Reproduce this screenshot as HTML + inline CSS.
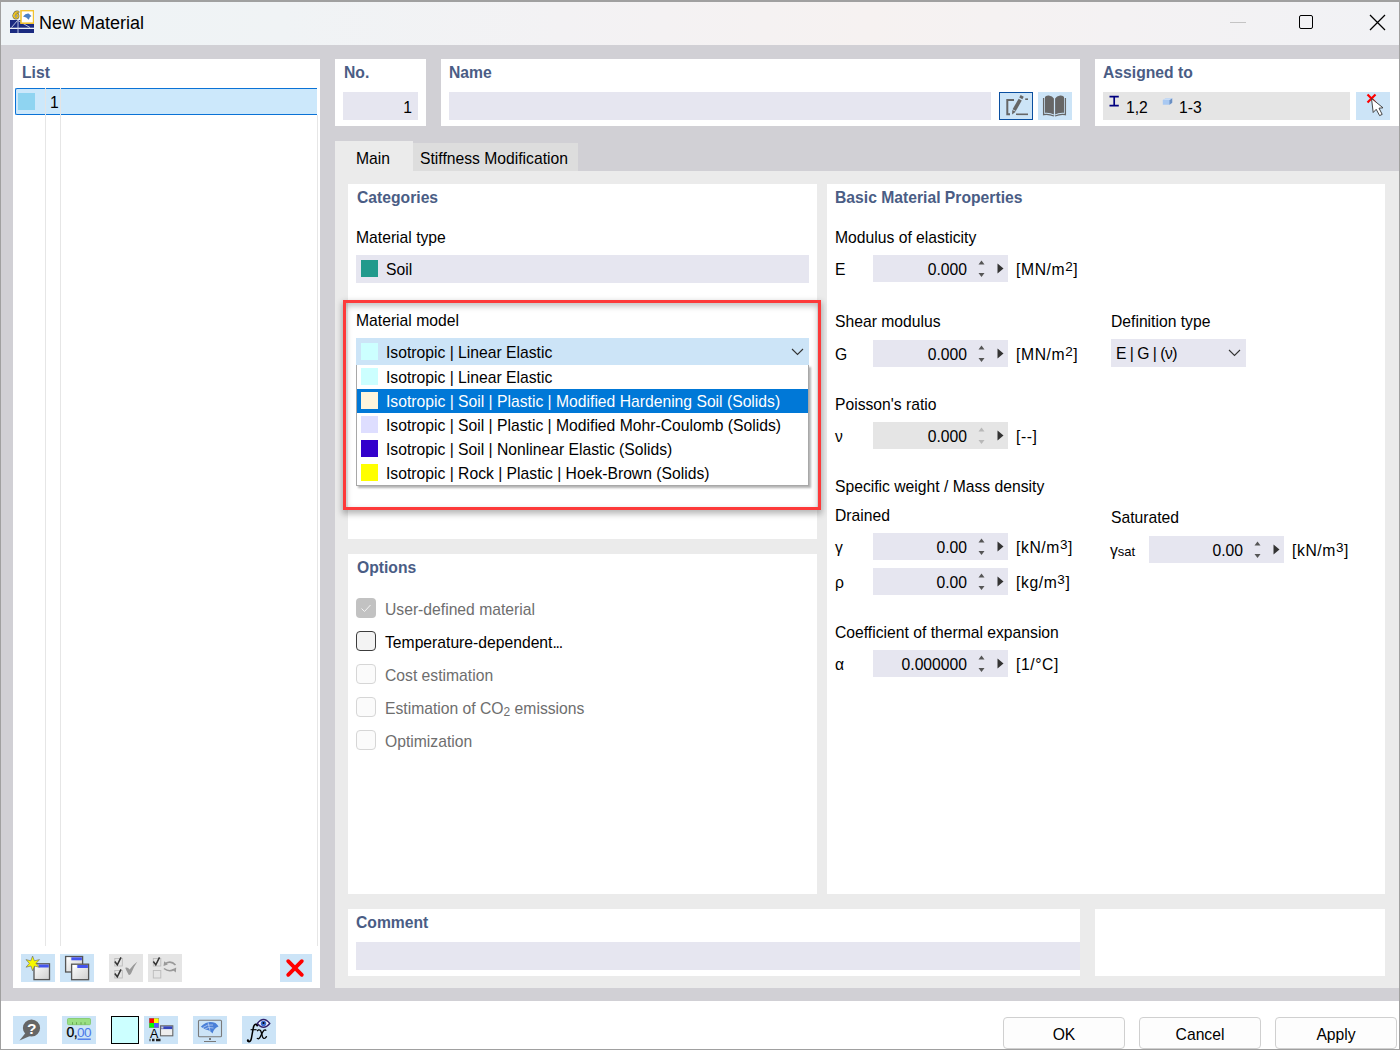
<!DOCTYPE html>
<html><head><meta charset="utf-8"><style>
html,body{margin:0;padding:0;width:1400px;height:1050px;overflow:hidden;background:#fff}
body{position:relative;font-family:"Liberation Sans",sans-serif}
body>div{position:absolute;box-sizing:content-box}
.t{white-space:nowrap;line-height:20px}
sup{font-size:13.5px;vertical-align:0;position:relative;top:-4px}
</style></head><body>
<div style="left:0px;top:0px;width:1400px;height:1050px;background:#a0a0a0;"></div>
<div style="left:1px;top:2px;width:1398px;height:43px;background:linear-gradient(90deg,#eef3f6 0%,#f0f3f5 20%,#f3f2f4 40%,#f6f2f1 62%,#f4f2f3 80%,#f1f2f5 100%);"></div>
<div style="left:1px;top:45px;width:1398px;height:956px;background:#d1d0d5;"></div>
<div style="left:1px;top:1001px;width:1398px;height:48px;background:#ffffff;"></div>
<svg style="position:absolute;left:10px;top:10px" width="24" height="24" viewBox="0 0 24 24">
<rect x="0" y="10" width="24" height="7.7" fill="#1a2a80"/>
<rect x="0" y="19" width="24" height="4" fill="#1a2a80"/>
<path d="M1.5 17.5 L7.5 10.5 M8 10 L8 23 M8 10.5 L20 17.5" stroke="#c8d0e8" stroke-width="0.9" fill="none"/>
<rect x="11" y="0.6" width="12.6" height="12.6" fill="#fff" stroke="#f2c230" stroke-width="1.6"/>
<path d="M13 6.5 Q15.5 3.2 18.5 3.5 L21.5 6 Q19.5 6.8 18.8 9.8 Q16.5 6.8 13 6.5 Z" fill="#4a80c8"/>
<g fill="none" stroke-linecap="round"><circle cx="6" cy="6" r="2.1" stroke="#6a6a5a" stroke-width="2.6"/><path d="M8.2 2 Q5 1.2 3.9 5.2 V6" stroke="#6a6a5a" stroke-width="2.6"/><circle cx="6" cy="6" r="2.1" stroke="#f2c824" stroke-width="1.4"/><path d="M8.2 2 Q5 1.2 3.9 5.2 V6" stroke="#f2c824" stroke-width="1.4"/></g>
</svg>
<div class="t" style="left:39px;top:13px;font-size:18px;color:#000;">New Material</div>
<div style="left:1230px;top:22px;width:16px;height:1px;background:#c4c4c4;"></div>
<div style="left:1299px;top:15px;width:12px;height:12px;border:1.5px solid #000;border-radius:2px"></div>
<svg style="position:absolute;left:1369px;top:14px" width="17" height="17" viewBox="0 0 17 17"><path d="M1 1 L16 16 M16 1 L1 16" stroke="#000" stroke-width="1.3"/></svg>
<div style="left:13px;top:59px;width:307px;height:929px;background:#ffffff;"></div>
<div class="t" style="left:22px;top:63px;font-size:15.7px;font-weight:bold;color:#4a5d85;">List</div>
<div style="left:45px;top:88px;width:1px;height:858px;background:#e6e6e6;"></div>
<div style="left:60px;top:88px;width:1px;height:858px;background:#e6e6e6;"></div>
<div style="left:317px;top:115px;width:1px;height:831px;background:#e6e6e6;"></div>
<div style="left:15px;top:88px;width:301px;height:25px;background:#cce8fb;border:1.2px solid #0a72d6;border-right:none;border-radius:2px 0 0 2px"></div>
<div style="left:45px;top:88px;width:1px;height:27px;background:#e4e4e4;"></div>
<div style="left:60px;top:88px;width:1px;height:27px;background:#e4e4e4;"></div>
<div style="left:18px;top:93px;width:17px;height:17px;background:#8fd4f1;"></div>
<div class="t" style="left:50px;top:93px;font-size:15.7px;color:#000;">1</div>
<div style="left:21px;top:954px;width:34px;height:28px;background:#cce4f7;"></div>
<div style="left:60px;top:954px;width:34px;height:28px;background:#cce4f7;"></div>
<div style="left:109px;top:954px;width:34px;height:28px;background:#e5e5e5;"></div>
<div style="left:148px;top:954px;width:34px;height:28px;background:#e5e5e5;"></div>
<div style="left:280px;top:954px;width:32px;height:28px;background:#cce4f7;"></div>
<div style="left:335px;top:59px;width:91px;height:67px;background:#ffffff;"></div>
<div class="t" style="left:344px;top:63px;font-size:15.7px;font-weight:bold;color:#4a5d85;">No.</div>
<div style="left:343px;top:92px;width:75px;height:28px;background:#e6e6f0;"></div>
<div class="t" style="right:988px;top:98px;font-size:15.7px;color:#000;">1</div>
<div style="left:441px;top:59px;width:639px;height:67px;background:#ffffff;"></div>
<div class="t" style="left:449px;top:63px;font-size:15.7px;font-weight:bold;color:#4a5d85;">Name</div>
<div style="left:449px;top:92px;width:542px;height:28px;background:#e6e6f0;"></div>
<div style="left:999px;top:92px;width:32px;height:26px;background:#cce4f7;border:1px solid #0a4fa0"></div>
<div style="left:1038px;top:92px;width:34px;height:28px;background:#cce4f7;"></div>
<div style="left:1095px;top:59px;width:304px;height:67px;background:#ffffff;"></div>
<div class="t" style="left:1103px;top:63px;font-size:15.7px;font-weight:bold;color:#4a5d85;">Assigned to</div>
<div style="left:1103px;top:92px;width:247px;height:28px;background:#e5e5e5;"></div>
<div style="left:1356px;top:92px;width:34px;height:28px;background:#cce4f7;"></div>
<div style="left:335px;top:141px;width:78px;height:31px;background:#ebebeb;"></div>
<div style="left:413px;top:143px;width:165px;height:29px;background:#dddddd;"></div>
<div class="t" style="left:356px;top:149px;font-size:15.7px;color:#000;">Main</div>
<div class="t" style="left:420px;top:149px;font-size:15.7px;color:#000;">Stiffness Modification</div>
<div style="left:335px;top:171px;width:1064px;height:817px;background:#ebebeb;"></div>
<div style="left:348px;top:184px;width:469px;height:355px;background:#ffffff;"></div>
<div class="t" style="left:357px;top:188px;font-size:15.7px;font-weight:bold;color:#4a5d85;">Categories</div>
<div class="t" style="left:356px;top:228px;font-size:15.7px;color:#000;">Material type</div>
<div style="left:356px;top:255px;width:453px;height:28px;background:#e6e6f0;"></div>
<div style="left:361px;top:260px;width:17px;height:17px;background:#219a8c;"></div>
<div class="t" style="left:386px;top:260px;font-size:15.7px;color:#000;">Soil</div>
<div style="left:348px;top:554px;width:469px;height:340px;background:#ffffff;"></div>
<div class="t" style="left:357px;top:558px;font-size:15.7px;font-weight:bold;color:#4a5d85;">Options</div>
<div style="left:827px;top:184px;width:558px;height:710px;background:#ffffff;"></div>
<div class="t" style="left:835px;top:188px;font-size:15.7px;font-weight:bold;color:#4a5d85;">Basic Material Properties</div>
<div style="left:348px;top:909px;width:732px;height:67px;background:#ffffff;"></div>
<div class="t" style="left:356px;top:913px;font-size:15.7px;font-weight:bold;color:#4a5d85;">Comment</div>
<div style="left:356px;top:942px;width:724px;height:28px;background:#e6e6f0;"></div>
<div style="left:1095px;top:909px;width:290px;height:67px;background:#ffffff;"></div>
<div class="t" style="left:356px;top:311px;font-size:15.7px;color:#000;">Material model</div>
<div style="left:356px;top:338px;width:453px;height:27px;background:#cce4f7;"></div>
<div style="left:361px;top:343px;width:17px;height:17px;background:#ccffff;"></div>
<div class="t" style="left:386px;top:343px;font-size:15.7px;color:#000;">Isotropic | Linear Elastic</div>
<svg style="position:absolute;left:791px;top:348px" width="13" height="8" viewBox="0 0 13 8"><path d="M1 1 L6.5 6.5 L12 1" stroke="#333" stroke-width="1.1" fill="none"/></svg>
<div style="left:356px;top:365px;width:451px;height:120px;background:#fff;border:1px solid #a8a8a8;border-top:none;box-shadow:2px 2px 2px rgba(0,0,0,0.3)"></div>
<div style="left:357px;top:389px;width:451px;height:24px;background:#0078d7;"></div>
<div style="left:361px;top:368px;width:17px;height:17px;background:#ccffff;"></div>
<div class="t" style="left:386px;top:368px;font-size:15.7px;color:#000;">Isotropic | Linear Elastic</div>
<div style="left:361px;top:392px;width:17px;height:17px;background:#fff5dc;"></div>
<div class="t" style="left:386px;top:392px;font-size:15.7px;color:#fff;">Isotropic | Soil | Plastic | Modified Hardening Soil (Solids)</div>
<div style="left:361px;top:416px;width:17px;height:17px;background:#dedeff;"></div>
<div class="t" style="left:386px;top:416px;font-size:15.7px;color:#000;">Isotropic | Soil | Plastic | Modified Mohr-Coulomb (Solids)</div>
<div style="left:361px;top:440px;width:17px;height:17px;background:#3300cc;"></div>
<div class="t" style="left:386px;top:440px;font-size:15.7px;color:#000;">Isotropic | Soil | Nonlinear Elastic (Solids)</div>
<div style="left:361px;top:464px;width:17px;height:17px;background:#ffff00;"></div>
<div class="t" style="left:386px;top:464px;font-size:15.7px;color:#000;">Isotropic | Rock | Plastic | Hoek-Brown (Solids)</div>
<div style="left:343px;top:300px;width:472px;height:204px;border:3px solid #fd3a3a;box-shadow:0px 3px 6px 1px rgba(0,0,0,0.28), inset 0px 3px 6px rgba(0,0,0,0.25)"></div>
<div style="left:356px;top:598px;width:20px;height:20px;background:#c2c2c2;border-radius:4px"></div>
<svg style="position:absolute;left:356px;top:598px" width="20" height="20" viewBox="0 0 20 20"><path d="M5.5 10.5 L8.5 13.5 L14.5 7" stroke="#f4f4f4" stroke-width="1" fill="none"/></svg>
<div class="t" style="left:385px;top:600px;font-size:15.7px;color:#6e6e6e;">User-defined material</div>
<div style="left:356px;top:631px;width:18px;height:18px;background:#f3f3f3;border:1px solid #3c3c3c;border-radius:4px"></div>
<div class="t" style="left:385px;top:633px;font-size:15.7px;color:#000;">Temperature-dependent<span style="letter-spacing:-1.2px">...</span></div>
<div style="left:356px;top:664px;width:18px;height:18px;background:#fbfbfb;border:1px solid #d6d6d6;border-radius:4px"></div>
<div class="t" style="left:385px;top:666px;font-size:15.7px;color:#6e6e6e;">Cost estimation</div>
<div style="left:356px;top:697px;width:18px;height:18px;background:#fbfbfb;border:1px solid #d6d6d6;border-radius:4px"></div>
<div class="t" style="left:385px;top:699px;font-size:15.7px;color:#6e6e6e;">Estimation of CO<span style="font-size:12px;position:relative;top:2px">2</span> emissions</div>
<div style="left:356px;top:730px;width:18px;height:18px;background:#fbfbfb;border:1px solid #d6d6d6;border-radius:4px"></div>
<div class="t" style="left:385px;top:732px;font-size:15.7px;color:#6e6e6e;">Optimization</div>
<div class="t" style="left:835px;top:228px;font-size:15.7px;color:#000;">Modulus of elasticity</div>
<div class="t" style="left:835px;top:260px;font-size:15.7px;color:#000;">E</div>
<div style="left:873px;top:255px;width:135px;height:27px;background:#e6e6f0;"></div>
<div class="t" style="right:433px;top:260px;font-size:15.7px;color:#000;">0.000</div>
<svg style="position:absolute;left:978px;top:260px" width="7" height="17" viewBox="0 0 7 17"><path d="M0.5 4.5 L3.5 0.5 L6.5 4.5 Z M0.5 13 L3.5 17 L6.5 13 Z" fill="#555"/></svg>
<svg style="position:absolute;left:997px;top:263px" width="7" height="11" viewBox="0 0 7 11"><path d="M0.5 0.5 L6.5 5.5 L0.5 10.5 Z" fill="#333"/></svg>
<div class="t" style="left:1016px;top:260px;font-size:15.7px;color:#000;letter-spacing:0.6px">[MN/m<sup>2</sup>]</div>
<div class="t" style="left:835px;top:312px;font-size:15.7px;color:#000;">Shear modulus</div>
<div class="t" style="left:1111px;top:312px;font-size:15.7px;color:#000;">Definition type</div>
<div class="t" style="left:835px;top:345px;font-size:15.7px;color:#000;">G</div>
<div style="left:873px;top:340px;width:135px;height:27px;background:#e6e6f0;"></div>
<div class="t" style="right:433px;top:345px;font-size:15.7px;color:#000;">0.000</div>
<svg style="position:absolute;left:978px;top:345px" width="7" height="17" viewBox="0 0 7 17"><path d="M0.5 4.5 L3.5 0.5 L6.5 4.5 Z M0.5 13 L3.5 17 L6.5 13 Z" fill="#555"/></svg>
<svg style="position:absolute;left:997px;top:348px" width="7" height="11" viewBox="0 0 7 11"><path d="M0.5 0.5 L6.5 5.5 L0.5 10.5 Z" fill="#333"/></svg>
<div class="t" style="left:1016px;top:345px;font-size:15.7px;color:#000;letter-spacing:0.6px">[MN/m<sup>2</sup>]</div>
<div style="left:1111px;top:339px;width:135px;height:28px;background:#e6e6f0;"></div>
<div class="t" style="left:1116px;top:344px;font-size:15.7px;color:#000;letter-spacing:-0.5px">E | G | (&nu;)</div>
<svg style="position:absolute;left:1228px;top:349px" width="13" height="8" viewBox="0 0 13 8"><path d="M1 1 L6.5 6.5 L12 1" stroke="#333" stroke-width="1.1" fill="none"/></svg>
<div class="t" style="left:835px;top:395px;font-size:15.7px;color:#000;">Poisson's ratio</div>
<div class="t" style="left:835px;top:427px;font-size:15.7px;color:#000;">&nu;</div>
<div style="left:873px;top:422px;width:135px;height:27px;background:#e5e5e5;"></div>
<div class="t" style="right:433px;top:427px;font-size:15.7px;color:#000;">0.000</div>
<svg style="position:absolute;left:978px;top:427px" width="7" height="17" viewBox="0 0 7 17"><path d="M0.5 4.5 L3.5 0.5 L6.5 4.5 Z M0.5 13 L3.5 17 L6.5 13 Z" fill="#b8b8b8"/></svg>
<svg style="position:absolute;left:997px;top:430px" width="7" height="11" viewBox="0 0 7 11"><path d="M0.5 0.5 L6.5 5.5 L0.5 10.5 Z" fill="#333"/></svg>
<div class="t" style="left:1016px;top:427px;font-size:15.7px;color:#000;letter-spacing:0.6px">[--]</div>
<div class="t" style="left:835px;top:477px;font-size:15.7px;color:#000;">Specific weight / Mass density</div>
<div class="t" style="left:835px;top:506px;font-size:15.7px;color:#000;">Drained</div>
<div class="t" style="left:1111px;top:508px;font-size:15.7px;color:#000;">Saturated</div>
<div class="t" style="left:835px;top:538px;font-size:15.7px;color:#000;">&gamma;</div>
<div style="left:873px;top:533px;width:135px;height:27px;background:#e6e6f0;"></div>
<div class="t" style="right:433px;top:538px;font-size:15.7px;color:#000;">0.00</div>
<svg style="position:absolute;left:978px;top:538px" width="7" height="17" viewBox="0 0 7 17"><path d="M0.5 4.5 L3.5 0.5 L6.5 4.5 Z M0.5 13 L3.5 17 L6.5 13 Z" fill="#555"/></svg>
<svg style="position:absolute;left:997px;top:541px" width="7" height="11" viewBox="0 0 7 11"><path d="M0.5 0.5 L6.5 5.5 L0.5 10.5 Z" fill="#333"/></svg>
<div class="t" style="left:1016px;top:538px;font-size:15.7px;color:#000;letter-spacing:0.6px">[kN/m<sup>3</sup>]</div>
<div class="t" style="left:835px;top:573px;font-size:15.7px;color:#000;">&rho;</div>
<div style="left:873px;top:568px;width:135px;height:27px;background:#e6e6f0;"></div>
<div class="t" style="right:433px;top:573px;font-size:15.7px;color:#000;">0.00</div>
<svg style="position:absolute;left:978px;top:573px" width="7" height="17" viewBox="0 0 7 17"><path d="M0.5 4.5 L3.5 0.5 L6.5 4.5 Z M0.5 13 L3.5 17 L6.5 13 Z" fill="#555"/></svg>
<svg style="position:absolute;left:997px;top:576px" width="7" height="11" viewBox="0 0 7 11"><path d="M0.5 0.5 L6.5 5.5 L0.5 10.5 Z" fill="#333"/></svg>
<div class="t" style="left:1016px;top:573px;font-size:15.7px;color:#000;letter-spacing:0.6px">[kg/m<sup>3</sup>]</div>
<div class="t" style="left:1110px;top:541px;font-size:15.7px;color:#000;">&gamma;<span style="font-size:13px">sat</span></div>
<div style="left:1149px;top:536px;width:135px;height:27px;background:#e6e6f0;"></div>
<div class="t" style="right:157px;top:541px;font-size:15.7px;color:#000;">0.00</div>
<svg style="position:absolute;left:1254px;top:541px" width="7" height="17" viewBox="0 0 7 17"><path d="M0.5 4.5 L3.5 0.5 L6.5 4.5 Z M0.5 13 L3.5 17 L6.5 13 Z" fill="#555"/></svg>
<svg style="position:absolute;left:1273px;top:544px" width="7" height="11" viewBox="0 0 7 11"><path d="M0.5 0.5 L6.5 5.5 L0.5 10.5 Z" fill="#333"/></svg>
<div class="t" style="left:1292px;top:541px;font-size:15.7px;color:#000;letter-spacing:0.6px">[kN/m<sup>3</sup>]</div>
<div class="t" style="left:835px;top:623px;font-size:15.7px;color:#000;">Coefficient of thermal expansion</div>
<div class="t" style="left:835px;top:655px;font-size:15.7px;color:#000;">&alpha;</div>
<div style="left:873px;top:650px;width:135px;height:27px;background:#e6e6f0;"></div>
<div class="t" style="right:433px;top:655px;font-size:15.7px;color:#000;">0.000000</div>
<svg style="position:absolute;left:978px;top:655px" width="7" height="17" viewBox="0 0 7 17"><path d="M0.5 4.5 L3.5 0.5 L6.5 4.5 Z M0.5 13 L3.5 17 L6.5 13 Z" fill="#555"/></svg>
<svg style="position:absolute;left:997px;top:658px" width="7" height="11" viewBox="0 0 7 11"><path d="M0.5 0.5 L6.5 5.5 L0.5 10.5 Z" fill="#333"/></svg>
<div class="t" style="left:1016px;top:655px;font-size:15.7px;color:#000;letter-spacing:0.6px">[1/&deg;C]</div>
<svg style="position:absolute;left:999px;top:92px" width="34" height="28" viewBox="0 0 34 28"><path d="M15 8 H8.3 V22.3 H11" stroke="#666" stroke-width="2" fill="none"/><path d="M17 22.3 H29" stroke="#666" stroke-width="1.6"/><path d="M26.2 7.2 H29" stroke="#666" stroke-width="1.6"/><path d="M15.2 18.2 L21.2 7.6" stroke="#666" stroke-width="3.6"/><path d="M21.8 6.4 L23.2 3.9" stroke="#666" stroke-width="3.6"/><path d="M13 22.5 L13.3 18 L16.8 19.8 Z" fill="#666"/></svg>
<svg style="position:absolute;left:1038px;top:92px" width="34" height="28" viewBox="0 0 34 28"><path d="M5.6 6 V22.6 Q10.5 21.6 16 24" stroke="#666" stroke-width="1.3" fill="none"/><path d="M27.4 6 V22.6 Q22.5 21.6 17 24" stroke="#666" stroke-width="1.3" fill="none"/><path d="M7 5 Q7.6 3.3 10.8 3.5 Q14.5 4 15.9 6.6 V22.6 Q12.5 20.4 7 20.8 Z" fill="#666"/><path d="M26 5 Q25.4 3.3 22.2 3.5 Q18.5 4 17.1 6.6 V22.6 Q20.5 20.4 26 20.8 Z" fill="#666"/></svg>
<svg style="position:absolute;left:1109px;top:95px" width="11" height="13" viewBox="0 0 11 13"><path d="M0.5 1.6 H9.8 M5.2 1.6 V10.6 M0.5 10.6 H9.8" stroke="#000080" stroke-width="1.7" fill="none"/></svg>
<div class="t" style="left:1126px;top:98px;font-size:15.7px;color:#000;">1,2</div>
<svg style="position:absolute;left:1162px;top:97px" width="11" height="9" viewBox="0 0 11 9"><path d="M0.8 3 L4 1.2 L10.2 1.2 L10.2 5.8 L7.5 7.8 L0.8 7.8 Z" fill="#a9c9f2"/><path d="M7.5 3 L10.2 1.2 L10.2 5.8 L7.5 7.8 Z" fill="#6b8fc2"/><path d="M0.8 3 L4 1.2 L10.2 1.2 L7.5 3 Z" fill="#c8dcf6"/></svg>
<div class="t" style="left:1179px;top:98px;font-size:15.7px;color:#000;">1-3</div>
<svg style="position:absolute;left:1356px;top:92px" width="34" height="28" viewBox="0 0 34 28"><path d="M11.5 2.5 L19.5 10.5 M19.5 2.5 L11.5 10.5" stroke="#ff0000" stroke-width="2.2"/><path d="M15.5 6.5 L17.2 20.5 L20.2 17.3 L23.6 23.6 L26.2 22.4 L23 16.2 L27 15.8 Z" fill="#fff" stroke="#333" stroke-width="0.9" stroke-linejoin="round"/></svg>
<svg style="position:absolute;left:21px;top:954px" width="34" height="28" viewBox="0 0 34 28"><defs><linearGradient id="wg" x1="0" y1="0" x2="1" y2="1"><stop offset="0" stop-color="#fff"/><stop offset="1" stop-color="#cfcfcf"/></linearGradient></defs><rect x="13" y="9.8" width="15.5" height="15.8" fill="url(#wg)" stroke="#555" stroke-width="1.3"/><rect x="17.5" y="10.5" width="10.3" height="3" fill="#4455ee"/><path d="M11.6 2 L13.4 6.8 L18.5 5.6 L15 9.4 L18.4 13.2 L13.5 12.1 L11.6 16.8 L9.9 12 L5 13.2 L8.3 9.4 L5 5.6 L9.8 6.8 Z" fill="#f8f800" stroke="#666" stroke-width="0.6"/></svg>
<svg style="position:absolute;left:60px;top:954px" width="34" height="28" viewBox="0 0 34 28"><rect x="5.6" y="2.5" width="17" height="15.5" fill="url(#wg)" stroke="#555" stroke-width="1.3"/><rect x="11.3" y="3.3" width="10.6" height="3" fill="#4455ee"/><rect x="7" y="3.6" width="3" height="2" fill="#fff"/><rect x="11.6" y="10.2" width="17" height="15.5" fill="url(#wg)" stroke="#555" stroke-width="1.3"/><rect x="17.3" y="11" width="10.6" height="3" fill="#4455ee"/><rect x="13" y="11.3" width="3" height="2" fill="#fff"/></svg>
<svg style="position:absolute;left:109px;top:954px" width="34" height="28" viewBox="0 0 34 28"><rect x="5.8" y="4.5" width="7.5" height="7.5" fill="none" stroke="#bbb" stroke-width="0.9"/><rect x="5.8" y="16.5" width="7.5" height="7.5" fill="none" stroke="#bbb" stroke-width="0.9"/><path d="M5.8 7.5 L8.3 10.8 L12 3.3 M5.8 19.5 L8.3 22.8 L12 15.3" stroke="#333" stroke-width="1.5" fill="none"/><path d="M16.2 13.8 Q18.6 12.6 20.6 15.6 Q24 10.6 28.3 7.7 Q25 12.2 22.2 19.3 Q21.2 21.4 19.8 21 Q17.6 17.6 16.2 13.8 Z" fill="#999"/></svg>
<svg style="position:absolute;left:148px;top:954px" width="34" height="28" viewBox="0 0 34 28"><rect x="5.3" y="4.5" width="7.5" height="7.5" fill="none" stroke="#bbb" stroke-width="0.9"/><rect x="5.3" y="16.5" width="7.5" height="7.5" fill="none" stroke="#bbb" stroke-width="0.9"/><path d="M5.3 7.5 L7.8 10.8 L11.5 3.3" stroke="#333" stroke-width="1.5" fill="none"/><path d="M27.5 11 Q23 6 17.5 9.5" stroke="#999" stroke-width="1.6" fill="none"/><path d="M15.5 12 L16.2 7.3 L19.8 10.5 Z" fill="#999"/><path d="M16 14.5 Q21 18.5 26 15.5" stroke="#999" stroke-width="1.6" fill="none"/><path d="M28.2 13.5 L27.8 18.5 L24.2 15.5 Z" fill="#999"/></svg>
<svg style="position:absolute;left:280px;top:954px" width="32" height="28" viewBox="0 0 32 28"><path d="M8.2 7.2 L21.8 20.8 M21.8 7.2 L8.2 20.8" stroke="#ff0000" stroke-width="3.8" stroke-linecap="round"/></svg>
<div style="left:13px;top:1016px;width:34px;height:28px;background:#cce4f7;"></div>
<svg style="position:absolute;left:13px;top:1016px" width="34" height="28" viewBox="0 0 34 28"><circle cx="18.5" cy="12" r="8.6" fill="#666"/><path d="M12.5 17 L6.5 24.5 L17 20 Z" fill="#666"/><text x="18.8" y="18.3" text-anchor="middle" font-family="Liberation Sans" font-weight="bold" font-size="15.5" fill="#fff">?</text></svg>
<div style="left:62px;top:1016px;width:34px;height:28px;background:#cce4f7;"></div>
<svg style="position:absolute;left:62px;top:1016px" width="34" height="28" viewBox="0 0 34 28"><rect x="5.5" y="2.5" width="23" height="6.2" rx="1" fill="#9adf83" stroke="#7cc666" stroke-width="0.8"/><path d="M10.5 8.5 V6.2 M14.5 8.5 V6.2 M19 8.5 V6.2 M23 8.5 V6.2" stroke="#5a9a48" stroke-width="0.8"/><text x="4.6" y="21.4" font-family="Liberation Sans" font-size="14" fill="#000" letter-spacing="-0.6" stroke="#000" stroke-width="0.25">0,</text><text x="15" y="21.4" font-family="Liberation Sans" font-size="13.5" fill="#4a78e8" letter-spacing="-0.4">00</text><path d="M15.5 23.2 H28.8" stroke="#4a78e8" stroke-width="1.4"/></svg>
<div style="left:111px;top:1016px;width:26px;height:26px;background:#ccffff;border:1.3px solid #000"></div>
<div style="left:144px;top:1016px;width:34px;height:28px;background:#cce4f7;"></div>
<svg style="position:absolute;left:144px;top:1016px" width="34" height="28" viewBox="0 0 34 28"><rect x="5" y="2" width="10" height="10" fill="#888"/><rect x="5.5" y="2.5" width="4.5" height="4.5" fill="#ff0000"/><rect x="10" y="2.5" width="4.5" height="4.5" fill="#ffff00"/><rect x="5.5" y="7" width="4.5" height="4.5" fill="#00ff00"/><rect x="10" y="7" width="4.5" height="4.5" fill="#5555ff"/><text x="6" y="21.5" font-family="Liberation Sans" font-size="12.5" fill="#000">A</text><path d="M5.5 24 H6.5 M8 24 H10.5 M12 24 H16.5" stroke="#222" stroke-width="2.5"/><rect x="16.5" y="9.8" width="12.3" height="10" fill="#eee" stroke="#666" stroke-width="1.1"/><rect x="17" y="10.3" width="11.3" height="2.8" fill="#3344bb"/><rect x="17.2" y="10.6" width="2.2" height="2" fill="#ccc"/></svg>
<div style="left:193px;top:1016px;width:34px;height:28px;background:#cce4f7;"></div>
<svg style="position:absolute;left:193px;top:1016px" width="34" height="28" viewBox="0 0 34 28"><rect x="5.5" y="4.3" width="23" height="16.5" rx="1" fill="none" stroke="#7a7a7a" stroke-width="1.1"/><circle cx="17" cy="23" r="1" fill="#555"/><path d="M11 25.5 H23" stroke="#7a7a7a" stroke-width="1"/><path d="M7.8 10.8 Q14 4 22.5 7 Q24.5 8.5 25.5 10.5 Q21 12 19.5 17.5 Q17 14 12.5 13.5 Q10 12 7.8 10.8 Z" fill="#4a80d8"/><path d="M10 11.5 Q14 8 20 9 M12 13 Q15 10.5 20.5 12 M15 6.2 L17 15" stroke="#c8daf5" stroke-width="0.7" fill="none"/></svg>
<div style="left:242px;top:1016px;width:34px;height:28px;background:#cce4f7;"></div>
<svg style="position:absolute;left:242px;top:1016px" width="34" height="28" viewBox="0 0 34 28"><path d="M15.6 9.3 Q15 8 13.6 8.3 Q11.8 8.8 11.2 12.3 L9.4 22.3 Q8.8 25.6 6.8 25.7 Q5.6 25.6 5.6 24.6" stroke="#000" stroke-width="1.5" fill="none"/><circle cx="15.2" cy="9.4" r="1.1"/><circle cx="5.9" cy="24.4" r="1.1"/><path d="M8.6 13.7 H14.6" stroke="#000" stroke-width="1.1"/><path d="M15.2 15.2 Q16.5 13 18.3 14.3 Q19 15 19.6 17.5 L20.4 20.5 Q21.2 23.2 23.3 22 Q24.3 21.3 24.6 20.2" stroke="#000" stroke-width="1.3" fill="none"/><path d="M24.2 14.6 Q23.3 13.4 21.8 14.4 Q20.8 15.3 19.3 18.8 Q17.8 22.6 16.4 22.8 Q15.4 22.8 15 22" stroke="#000" stroke-width="1.3" fill="none"/><path d="M15.3 7.5 Q21.5 -0.5 27.8 7.5 Q21.5 15 15.3 7.5 Z" fill="#fff" stroke="#2f1f6a" stroke-width="1.3"/><circle cx="21.5" cy="7.5" r="2.8" fill="#3a6ad0"/><circle cx="21.5" cy="7" r="1" fill="#000"/></svg>
<div style="left:1003px;top:1017px;width:120px;height:30px;border:1px solid #d0d0d0;border-radius:4px;background:#fdfdfd;text-align:center;font-size:15.7px;line-height:33px">OK</div>
<div style="left:1139px;top:1017px;width:120px;height:30px;border:1px solid #d0d0d0;border-radius:4px;background:#fdfdfd;text-align:center;font-size:15.7px;line-height:33px">Cancel</div>
<div style="left:1275px;top:1017px;width:120px;height:30px;border:1px solid #d0d0d0;border-radius:4px;background:#fdfdfd;text-align:center;font-size:15.7px;line-height:33px">Apply</div>
</body></html>
